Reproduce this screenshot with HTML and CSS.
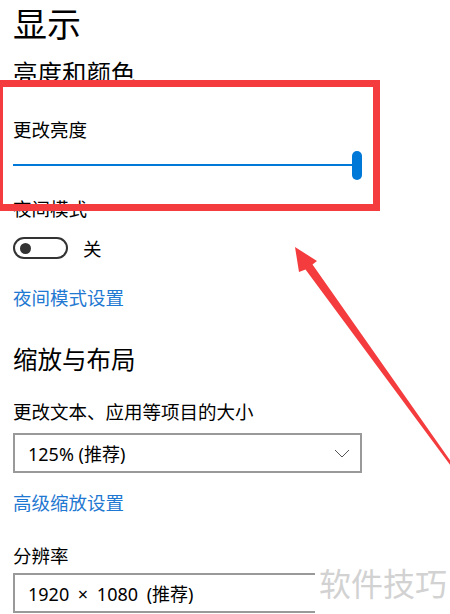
FILE: index.html
```html
<!DOCTYPE html>
<html lang="zh-CN">
<head>
    <meta charset="UTF-8">
    <meta name="viewport" content="width=device-width, initial-scale=1.0">
    <title>显示</title>
    <link rel="stylesheet" href="styles.css">
</head>
<body>

    <div class="page">
        <h1 class="page-title">显示</h1>

        <h2 class="section-title">亮度和颜色</h2>
        <div class="label label-brightness">更改亮度</div>
        <div class="slider">
            <div class="slider-track"></div>
            <div class="slider-thumb"></div>
        </div>

        <div class="label label-night">夜间模式</div>
        <div class="toggle-row">
            <div class="toggle"><span class="toggle-dot"></span></div>
            <span class="toggle-text">关</span>
        </div>
        <a class="link link-night" href="#">夜间模式设置</a>

        <h2 class="section-title section-scale">缩放与布局</h2>
        <div class="label label-size">更改文本、应用等项目的大小</div>
        <div class="dropdown">
            <span>125% (推荐)</span>
            <svg class="chevron" width="16" height="9" viewBox="0 0 16 9"><polyline points="1,1 8,8 15,1" fill="none" stroke="#555" stroke-width="1"/></svg>
        </div>
        <a class="link link-scale" href="#">高级缩放设置</a>

        <div class="label label-res">分辨率</div>
        <div class="dropdown dropdown-res">
            <span>1920 × 1080 (推荐)</span>
        </div>
    </div>

    <!-- annotation on top of the screenshot -->
    <div class="mark-box"></div>
    <svg class="mark-arrow" width="450" height="614" viewBox="0 0 450 614">
        <polygon points="295,247 317,261 312.5,264.5 461,476 459,477 305.5,269.5 299,272" fill="#f43c3e"/>
    </svg>
    <div class="watermark">软件技巧</div>

</body>
</html>
```

FILE: styles.css
```css
* {
    margin: 0;
    padding: 0;
    box-sizing: border-box;
}

body {
    font-family: "Noto Sans CJK SC", "Liberation Sans", sans-serif;
    color: #000;
    background: #fff;
    width: 450px;
    height: 614px;
    overflow: hidden;
    position: relative;
}

.page {
    padding-left: 13px;
}

.page-title {
    font-size: 34px;
    font-weight: normal;
    line-height: 46px;
}

.section-title {
    font-size: 24.5px;
    font-weight: normal;
    line-height: 34px;
    margin-top: 10px;
}

.label {
    font-size: 18.5px;
    line-height: 26px;
}

.label-brightness { margin-top: 26px; }

.slider {
    width: 349px;
    height: 30px;
    margin-top: 8px;
    display: flex;
    align-items: center;
}

.slider-track {
    width: 340px;
    height: 2px;
    background: #0078d7;
}

.slider-thumb {
    width: 10px;
    height: 29px;
    border-radius: 5px;
    background: #0078d7;
}

.label-night { margin-top: 15px; }

.toggle-row {
    display: flex;
    align-items: center;
    margin-top: 16px;
    height: 22px;
}

.toggle {
    width: 55px;
    height: 22px;
    border: 2px solid #333;
    border-radius: 11px;
    display: flex;
    align-items: center;
    padding-left: 5px;
}

.toggle-dot {
    width: 11px;
    height: 11px;
    border-radius: 50%;
    background: #333;
}

.toggle-text {
    font-size: 18.5px;
    margin-left: 15px;
}

.link {
    display: block;
    color: #1f78d1;
    text-decoration: none;
    font-size: 18.5px;
    line-height: 26px;
}

.link-night { margin-top: 25px; }

.section-scale { margin-top: 32px; }

.label-size { margin-top: 22px; }

.dropdown {
    width: 349px;
    height: 40px;
    border: 2px solid #999;
    margin-top: 9px;
    display: flex;
    align-items: center;
    justify-content: space-between;
    padding: 0 10px 0 13px;
    font-family: "Noto Sans", "Noto Sans CJK SC", sans-serif;
    font-size: 18px;
}

.link-scale { margin-top: 16px; }

.label-res { margin-top: 27px; }

.dropdown-res {
    margin-top: 5px;
    word-spacing: 4px;
}

.mark-box {
    position: absolute;
    left: -4px;
    top: 80px;
    width: 384px;
    height: 131px;
    border: 7px solid #f43c3e;
}

.mark-arrow {
    position: absolute;
    left: 0;
    top: 0;
}

.watermark {
    position: absolute;
    left: 315px;
    top: 556px;
    width: 135px;
    height: 58px;
    background: #fff;
    color: #d2d2d2;
    font-size: 32px;
    line-height: 52px;
    padding-left: 4px;
}
```
